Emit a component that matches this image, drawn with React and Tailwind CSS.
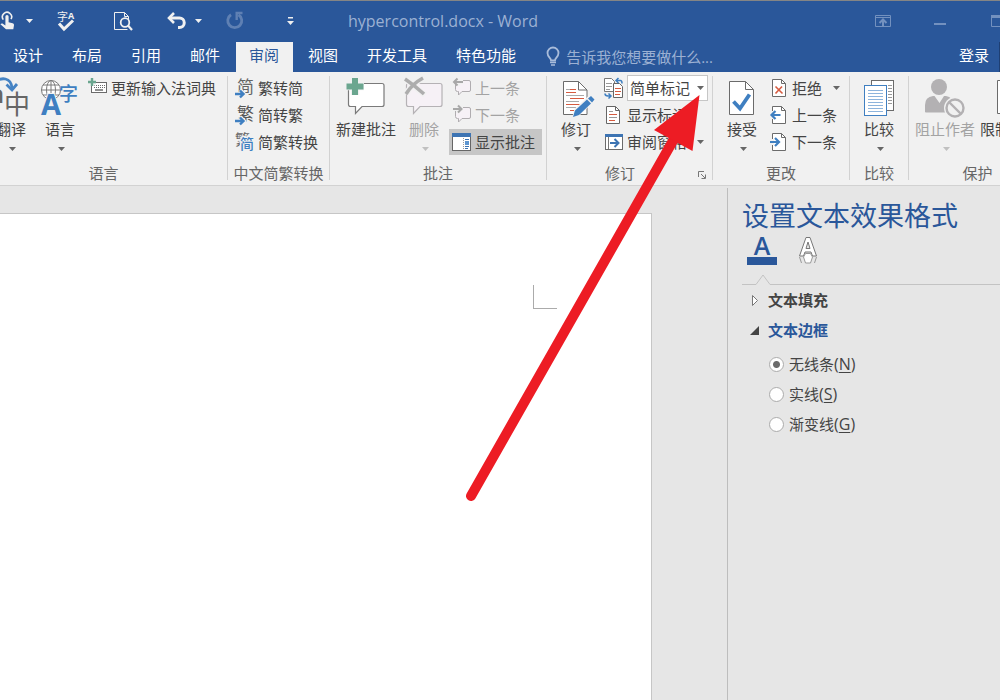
import React from "react";

function Caret({ className = "text-[#666]" }) {
  return (
    <svg width="7" height="4" viewBox="0 0 7 4" className={`shrink-0 ${className}`} aria-hidden="true">
      <path d="M0 0h7L3.5 4z" fill="currentColor" />
    </svg>
  );
}

function Icon({ w, h = 20, children }) {
  return (
    <svg width={w} height={h} viewBox={`0 0 ${w} ${h}`} fill="none" className="shrink-0 overflow-visible" aria-hidden="true">
      {children}
    </svg>
  );
}

/* ---------- Title bar icons ---------- */

const TouchIcon = () => (
  <Icon w={15}>
    <path d="M3.3 8.6A4.6 4.6 0 1 1 11 8.2" stroke="#f0f0f0" strokeWidth="1.6" />
    <path d="M5.4 5.6a1.6 1.6 0 0 1 3.2 0v5.6l4 1.1c1 .3 1.5 1 1.4 2l-.7 4H6L.4 13.3c.6-1 1.8-1.1 2.8-.4l2.2 1.5z" fill="#f0f0f0" />
  </Icon>
);
const SpellIcon = () => (
  <Icon w={19}>
    <text x="0" y="10" fontSize="11" fill="#f0f0f0">字</text>
    <text x="11" y="8" fontSize="9" fontWeight="700" fill="#f0f0f0">A</text>
    <path d="M2 12.5l5 5.5 9-8.5" stroke="#f0f0f0" strokeWidth="3" />
  </Icon>
);
const PreviewIcon = () => (
  <Icon w={20}>
    <path d="M15.5 8V5.5l-4-4h-10v17h13M11.5 1.5v4h4" stroke="#f0f0f0" />
    <circle cx="12" cy="11.5" r="4.3" stroke="#f0f0f0" strokeWidth="1.8" />
    <path d="M15 14.5l4 4.5" stroke="#f0f0f0" strokeWidth="2.2" />
  </Icon>
);
const UndoIcon = () => (
  <Icon w={19}>
    <path d="M7 2L2 7l5 5" stroke="#f0f0f0" strokeWidth="2.6" />
    <path d="M2 7h10.500a4.600 4.600 0 0 1 0 9.500H11" stroke="#f0f0f0" strokeWidth="3" />
  </Icon>
);
const RedoIcon = () => (
  <Icon w={18}>
    <path d="M5 3.800a7 7 0 1 0 7.500 0" stroke="#5f80b3" strokeWidth="2.8" />
    <path d="M9.500 2h7M10.700 2v7" stroke="#5f80b3" strokeWidth="2.4" />
  </Icon>
);

/* ---------- Ribbon icons ---------- */

const TranslateIcon = () => (
  <Icon w={48} h={44}>
    <text x="2" y="27" fontSize="25" fontWeight="700" fill="#666">a</text>
    <text x="17" y="38" fontSize="26" fill="#666">中</text>
    <path d="M9 6c5-5 15-5 16 6" stroke="#4583c4" strokeWidth="2.8" />
    <path d="M19.500 8.500l5.500 5.500 5-6" stroke="#4583c4" strokeWidth="2.8" />
  </Icon>
);
const LanguageIcon = () => (
  <Icon w={50} h={44}>
    <g stroke="#7a7a7a">
      <circle cx="16" cy="14" r="9.5" fill="#fff" />
      <ellipse cx="16" cy="14" rx="4.5" ry="9.5" />
      <path d="M16 4.500v19M6.500 14h19M8 9h16M8 19h16" />
    </g>
    <text x="6" y="39" fontSize="29" fontWeight="700" fill="#3f7fc1" stroke="#f1f1f1" strokeWidth="2" paintOrder="stroke">A</text>
    <text x="24" y="25" fontSize="19" fontWeight="500" fill="#3f7fc1">字</text>
  </Icon>
);
const KeyboardIcon = () => (
  <Icon w={19}>
    <rect x="3.500" y="4.500" width="15" height="10" fill="#fff" stroke="#6b6b6b" />
    <path d="M6 7.500h11M6 9.500h11" stroke="#6b6b6b" strokeDasharray="1 1" />
    <path d="M7 12h8" stroke="#6b6b6b" strokeWidth="1.500" />
    <path d="M4 0v8M0 4h8" stroke="#f1f1f1" strokeWidth="5" />
    <path d="M4 0v8M0 4h8" stroke="#6ba68f" strokeWidth="2.400" />
  </Icon>
);
const ConvertArrow = () => (
  <>
    <path d="M0 16h8M5 12l4 4-4 4" stroke="#f1f1f1" strokeWidth="4" />
    <path d="M0 16h8M5 12.500l3.500 3.500L5 19.500" stroke="#3f7fc1" strokeWidth="2.400" />
  </>
);
const ToSimplifiedIcon = () => (
  <Icon w={19}>
    <text x="2" y="15" fontSize="17" fill="#666">简</text>
    <ConvertArrow />
  </Icon>
);
const ToTraditionalIcon = () => (
  <Icon w={19}>
    <text x="2" y="15" fontSize="17" fill="#555">繁</text>
    <ConvertArrow />
  </Icon>
);
const ConvertIcon = () => (
  <Icon w={19}>
    <text x="0" y="13" fontSize="15" fill="#666">繁</text>
    <text x="5" y="17" fontSize="14" fontWeight="500" fill="#3f7fc1" stroke="#f1f1f1" strokeWidth="3" paintOrder="stroke">简</text>
  </Icon>
);
const NewCommentIcon = () => (
  <Icon w={38} h={44}>
    <path d="M3 7.500h32q2 0 2 2v19q0 2-2 2H15L8.500 37.500v-7H3.500q-2 0-2-2V9.500q0-2 2-2z" fill="#fff" stroke="#7a7a7a" strokeWidth="1.200" />
    <path d="M8 1v18M-1 10h18" stroke="#f1f1f1" strokeWidth="8.500" />
    <path d="M8 2v17M-.5 10.500h17" stroke="#6ba68f" strokeWidth="6" />
  </Icon>
);
const DeleteCommentIcon = () => (
  <Icon w={38} h={44}>
    <path d="M3 7.500h32q2 0 2 2v19q0 2-2 2H15L8.500 37.500v-7H3.500q-2 0-2-2V9.500q0-2 2-2z" fill="#f6f1f6" stroke="#b5b2b5" strokeWidth="1.200" />
    <path d="M0 3l20 16M18 2Q6 9 1 18" stroke="#f1f1f1" strokeWidth="6" />
    <path d="M0 3q9 6 19 15M18 2Q7 8 1 18" stroke="#adadad" strokeWidth="3.500" />
  </Icon>
);
const CommentNavIcon = ({ next }) => (
  <Icon w={18}>
    <path d="M4 2.500h12q1.500 0 1.500 1.500v8q0 1.500-1.500 1.500H9L5.500 17v-3.500H4.500q-2 0-2-2V4q0-1.500 1.500-1.500z" fill="#f6f1f6" stroke="#b0adb0" />
    <path d="M0 4h10M5 0v8" stroke="#f1f1f1" strokeWidth="4" />
    {next ? (
      <path d="M0 4h8M5 .5L8.500 4 5 7.500" stroke="#a8a8a8" strokeWidth="2" />
    ) : (
      <path d="M1 4h9M4.500 .5L1 4l3.500 3.500" stroke="#a8a8a8" strokeWidth="2" />
    )}
  </Icon>
);
const ShowCommentsIcon = () => (
  <Icon w={19}>
    <rect x=".5" y="1.500" width="18" height="17" fill="#fff" stroke="#666" />
    <path d="M0 1h19v4H0z" fill="#3d74b3" />
    <path d="M11.500 6v12" stroke="#999" strokeDasharray="1 1" />
    <path d="M13 7.500h4M13 14.500h4M13 16.500h3" stroke="#3d74b3" />
    <path d="M13 9h4v4h-4z" fill="#5d95d0" />
  </Icon>
);
const TrackIcon = () => (
  <Icon w={36} h={44}>
    <path d="M5.500 5.500h15l8.500 8.500v24.500H5.500z" fill="#fff" stroke="#6b6b6b" />
    <path d="M20.500 5.500V14H29" stroke="#6b6b6b" />
    <path d="M8 13.500h4M8 19.500h18M8 25.500h13M8 31.500h10" stroke="#aaa" />
    <path d="M12 13.500h6M8 16.500h10M12 22.500h14M8 28.500h14M12 34.500h4" stroke="#d65b40" />
    <path d="M14 42l2.500-9L31 19.500l6 5L22 39z" fill="#f1f1f1" />
    <path d="M15 41l2-6.500L29 23.500l4 4L21 39zM30 22.500l3-2.500 3.500 3.500-2.500 3z" fill="#3f7fc1" />
  </Icon>
);
const MarkupIcon = () => (
  <Icon w={19}>
    <path d="M.5 .5h7l3 3v10H.5z" fill="#fff" stroke="#777" />
    <path d="M2 5.500h6M2 8.500h6M2 11.500h4" stroke="#999" />
    <path d="M9.500 5.500h6l3 3v11h-9z" fill="#fff" stroke="#666" />
    <path d="M11 10.500h6M11 13.500h6M11 16.500h5" stroke="#d65b40" />
    <path d="M13 2.500h3.500q1.500 0 1.500 3M14.500 0L12 2.500 14.500 5M1 15.500q0 2.500 3 2.500h2M4.500 15.500L7 18l-2.500 2.500" stroke="#3f7fc1" strokeWidth="1.500" />
  </Icon>
);
const ShowMarkupIcon = () => (
  <Icon w={19}>
    <path d="M2.500 1.500h9l4 4v13h-13z" fill="#fff" stroke="#666" />
    <path d="M11.500 1.500v4h4" stroke="#666" />
    <path d="M5 6.500h4M5 12.500h8" stroke="#999" />
    <path d="M5 9.500h8M5 15.500h6" stroke="#d65b40" />
  </Icon>
);
const ReviewPaneIcon = () => (
  <Icon w={19}>
    <rect x="1.500" y="2.500" width="17" height="15" fill="#fff" stroke="#6b6b6b" />
    <path d="M1 2h18v3H1z" fill="#3d74b3" />
    <path d="M4.500 5v12" stroke="#777" />
    <path d="M6 11h8M10.500 7l4 4-4 4" stroke="#3d74b3" strokeWidth="2" />
  </Icon>
);
const AcceptIcon = () => (
  <Icon w={26} h={44}>
    <path d="M.5 5.500h16l8 8v25H.5z" fill="#fff" stroke="#6b6b6b" />
    <path d="M16.500 5.500v8h8" stroke="#6b6b6b" />
    <path d="M4.500 25.500l6.500 7 9.500-14" stroke="#3f7fc1" strokeWidth="3.800" />
  </Icon>
);
const SmallPage = ({ children }) => (
  <Icon w={17}>
    <path d="M2.500 1.500h9l4 4v13h-13z" fill="#fff" stroke="#6b6b6b" />
    <path d="M11.500 1.500v4h4" stroke="#6b6b6b" />
    {children}
  </Icon>
);
const RejectIcon = () => (
  <SmallPage>
    <path d="M5.500 8.500l7 7M12 8.500l-6.500 7" stroke="#d65b40" strokeWidth="1.600" />
  </SmallPage>
);
const PrevChangeIcon = () => (
  <SmallPage>
    <path d="M0 6h4v8H0z" fill="#f1f1f1" />
    <path d="M2 10h8.500M5.500 6L1.500 10l4 4" stroke="#3f7fc1" strokeWidth="2.200" />
  </SmallPage>
);
const NextChangeIcon = () => (
  <SmallPage>
    <path d="M0 7h4v6H0z" fill="#f1f1f1" />
    <path d="M0 10h8.500M5 6l4 4-4 4" stroke="#3f7fc1" strokeWidth="2.200" />
  </SmallPage>
);
const CompareIcon = () => (
  <Icon w={30} h={44}>
    <rect x="7.500" y="4.500" width="22" height="30" fill="#fff" stroke="#6b6b6b" />
    <path d="M24 9.500h4M24 12.500h4M24 15.500h4M24 18.500h4M24 21.500h4M24 24.500h4M24 27.500h4" stroke="#999" />
    <rect x=".5" y="9.500" width="22" height="30" fill="#fff" stroke="#3f7fc1" />
    <path d="M4 14.500h15M4 17.500h15M4 20.500h15M4 23.500h15M4 26.500h15M4 29.500h15M4 32.500h15M4 35.500h15" stroke="#8db4dc" />
  </Icon>
);
const BlockAuthorIcon = () => (
  <Icon w={40} h={44}>
    <circle cx="14" cy="11" r="8" fill="#b3b1b3" />
    <path d="M0 36V29q0-8 8-9h1.500l5 7 4.500-7h2q7 1 8 9v7.500H3Q0 36.500 0 36z" fill="#b3b1b3" />
    <circle cx="30" cy="32" r="11" fill="#f1f1f1" />
    <circle cx="30" cy="32" r="8.500" stroke="#b3b1b3" strokeWidth="2.400" />
    <path d="M24 26l12 12" stroke="#b3b1b3" strokeWidth="2.400" />
  </Icon>
);
const RestrictIcon = () => (
  <Icon w={26} h={44}>
    <path d="M.5 4.500h16l8 8v25H.5z" fill="#fff" stroke="#6b6b6b" />
  </Icon>
);

/* ---------- Ribbon building blocks ---------- */

function Group({ label, className = "", launcher = false, children }) {
  return (
    <section aria-label={label} className={`flex shrink-0 flex-col border-r border-[#d2d2d2] ${className}`}>
      <div className="flex h-[90px] items-start">{children}</div>
      <div className={`flex h-[14px] items-center whitespace-nowrap text-[#666] ${launcher ? "pl-[58px] pr-[6px]" : "justify-center"}`}>
        <span className="leading-[14px]">{label}</span>
        {launcher && (
          <button type="button" aria-label="修订选项" className="ml-auto pt-1">
            <svg width="8" height="8" viewBox="0 0 8 8" fill="none" className="block" aria-hidden="true">
              <path d="M.5 6V.5H6M3 3l4 4M7.500 3.500v4h-4" stroke="#777" />
            </svg>
          </button>
        )}
      </div>
    </section>
  );
}

function BigButton({ icon, label, className = "", caret = true, disabled = false }) {
  return (
    <button
      type="button"
      disabled={disabled}
      className={`flex shrink-0 flex-col items-center whitespace-nowrap ${disabled ? "text-[#a3a3a3]" : "text-[#444]"} ${className}`}
    >
      {icon}
      <span className="pb-[3px] leading-[18px]">{label}</span>
      {caret && (
        <span className="flex h-4 items-center pl-[2px]">
          <Caret className={disabled ? "text-[#c0c0c0]" : "text-[#666]"} />
        </span>
      )}
    </button>
  );
}

function SmallButton({ icon, label, className = "gap-1", disabled = false, caret = false }) {
  return (
    <button
      type="button"
      disabled={disabled}
      className={`flex h-6 items-center whitespace-nowrap ${disabled ? "text-[#a3a3a3]" : "text-[#444]"} ${className}`}
    >
      {icon}
      <span>{label}</span>
      {caret && <Caret className="ml-auto text-[#666]" />}
    </button>
  );
}

const Column = ({ className = "", children }) => (
  <div className={`flex flex-col gap-[3px] ${className}`}>{children}</div>
);

/* ---------- Page sections ---------- */

function TitleBar() {
  const qa = "flex h-10 shrink-0 items-center";
  return (
    <header className="flex h-[42px] items-center overflow-hidden border-t border-[#858585] pb-px">
      <button type="button" aria-label="触摸/鼠标模式" className={`${qa} w-[57px] gap-[11px]`}>
        <TouchIcon />
        <Caret className="text-[#f0f0f0]" />
      </button>
      <button type="button" aria-label="拼写和语法" className={`${qa} w-[56px]`}><SpellIcon /></button>
      <button type="button" aria-label="打印预览" className={`${qa} w-[54px]`}><PreviewIcon /></button>
      <button type="button" aria-label="撤消" className={`${qa} w-[59px] gap-[9px]`}>
        <UndoIcon />
        <Caret className="text-[#f0f0f0]" />
      </button>
      <button type="button" aria-label="重复" disabled className={`${qa} w-[61px]`}><RedoIcon /></button>
      <button type="button" aria-label="自定义快速访问工具栏" className={`${qa} w-[61px]`}>
        <svg width="7" height="8" viewBox="0 0 7 8" aria-hidden="true">
          <path d="M1 0h5v1.500H1zM0 4h7L3.500 8z" fill="#f0f0f0" />
        </svg>
      </button>
      <h1 className="whitespace-nowrap text-base leading-5 text-[#9cb1d3]">hypercontrol.docx - Word</h1>
      <div className="ml-auto flex items-center pb-px">
        <button type="button" aria-label="功能区显示选项" className="w-[59px]">
          <svg width="16" height="12" viewBox="0 0 16 12" fill="none" aria-hidden="true">
            <path d="M.5 .5h15v11H.5zM.5 2.500h15" stroke="#7391bf" />
            <path d="M8 11V5M4.500 8L8 4.500 11.500 8" stroke="#7391bf" strokeWidth="2" />
          </svg>
        </button>
        <button type="button" aria-label="最小化" className="w-[57px]">
          <svg width="12" height="8" viewBox="0 0 12 8" aria-hidden="true"><path d="M0 6h12v2H0z" fill="#7391bf" /></svg>
        </button>
        <button type="button" aria-label="最大化" className="w-[9px] overflow-hidden">
          <svg width="12" height="12" viewBox="0 0 12 12" fill="none" className="max-w-none" aria-hidden="true">
            <path d="M.5 .5h11v11H.5z" stroke="#7391bf" />
            <path d="M0 0h12v3H0z" fill="#7391bf" />
          </svg>
        </button>
      </div>
    </header>
  );
}

const tabs = ["设计", "布局", "引用", "邮件", "审阅", "视图", "开发工具", "特色功能"];

function TabBar() {
  return (
    <div className="flex h-[30px] items-stretch">
      <nav className="flex gap-[2px]" aria-label="功能区选项卡">
        {tabs.map((t, i) => (
          <button
            key={t}
            type="button"
            className={`whitespace-nowrap pb-1 pr-[14px] ${i === 0 ? "pl-[13px]" : "pl-[13px]"} ${t === "审阅" ? "bg-[#f1f1f1] text-[#2a579a]" : "text-white"}`}
          >
            {t}
          </button>
        ))}
      </nav>
      <label className="ml-4 flex flex-1 items-center gap-[5px]">
        <Icon w={15}>
          <path d="M5 13.500c0-2.500-3.500-3.500-3.500-7.500a5.500 5.500 0 0 1 11 0c0 4-3.500 5-3.500 7.500z" stroke="#a9bcda" strokeWidth="1.800" />
          <path d="M4 15.500h6M5 18h4" stroke="#a9bcda" strokeWidth="1.600" />
        </Icon>
        <input
          type="text"
          aria-label="告诉我您想要做什么"
          placeholder="告诉我您想要做什么..."
          className="w-full bg-transparent pb-px text-white outline-none placeholder:text-[#9cb1d3]"
        />
      </label>
      <button type="button" className="mr-[10px] whitespace-nowrap pb-1 text-white">登录</button>
      <span className="w-px bg-[#1e3f73]" />
    </div>
  );
}

function Ribbon() {
  return (
    <div className="flex overflow-hidden border-b border-[#d2d2d2] bg-[#f1f1f1] pb-[5px] pt-1">
      <Group label="语言" className="-ml-5 w-[248px]">
        <BigButton icon={<TranslateIcon />} label="翻译" className="ml-[7px] w-[48px]" />
        <BigButton icon={<LanguageIcon />} label="语言" className="w-[50px]" />
        <Column className="ml-[3px]">
          <SmallButton icon={<KeyboardIcon />} label="更新输入法词典" />
        </Column>
      </Group>

      <Group label="中文简繁转换" className="w-[102px]">
        <Column className="pl-[7px]">
          <SmallButton icon={<ToSimplifiedIcon />} label="繁转简" />
          <SmallButton icon={<ToTraditionalIcon />} label="简转繁" />
          <SmallButton icon={<ConvertIcon />} label="简繁转换" />
        </Column>
      </Group>

      <Group label="批注" className="w-[217px]">
        <BigButton icon={<NewCommentIcon />} label="新建批注" caret={false} className="ml-1 w-[64px]" />
        <BigButton icon={<DeleteCommentIcon />} label="删除" disabled className="ml-[2px] w-[48px]" />
        <Column className="ml-px">
          <SmallButton icon={<CommentNavIcon />} label="上一条" disabled className="gap-1 px-1" />
          <SmallButton icon={<CommentNavIcon next />} label="下一条" disabled className="gap-1 px-1" />
          <div className="flex h-6 items-center">
            <button type="button" aria-pressed="true" className="flex h-[26px] shrink-0 items-center gap-1 whitespace-nowrap bg-[#c6c6c6] pl-[3px] pr-[7px] text-[#444]">
              <ShowCommentsIcon />
              <span>显示批注</span>
            </button>
          </div>
        </Column>
      </Group>

      <Group label="修订" launcher className="w-[166px]">
        <BigButton icon={<TrackIcon />} label="修订" className="ml-1 w-[50px]" />
        <Column className="ml-[3px] flex-1 pr-1">
          <div className="flex h-6 items-center gap-1">
            <MarkupIcon />
            <label className="relative flex flex-1 items-center">
              <select aria-label="显示以供审阅" className="h-[26px] w-full appearance-none border border-[#c6c6c6] bg-white pl-[2px] text-[#444]">
                <option>简单标记</option>
                <option>所有标记</option>
                <option>无标记</option>
                <option>原始状态</option>
              </select>
              <span className="pointer-events-none absolute right-1 flex">
                <Caret />
              </span>
            </label>
          </div>
          <SmallButton icon={<ShowMarkupIcon />} label="显示标记" className="gap-1 pr-1" />
          <SmallButton icon={<ReviewPaneIcon />} label="审阅窗格" caret className="gap-1 pr-1" />
        </Column>
      </Group>

      <Group label="更改" className="w-[137px]">
        <BigButton icon={<AcceptIcon />} label="接受" className="ml-[5px] w-[48px]" />
        <Column className="ml-1 w-[70px]">
          <SmallButton icon={<RejectIcon />} label="拒绝" caret className="gap-[5px]" />
          <SmallButton icon={<PrevChangeIcon />} label="上一条" className="gap-[5px]" />
          <SmallButton icon={<NextChangeIcon />} label="下一条" className="gap-[5px]" />
        </Column>
      </Group>

      <Group label="比较" className="w-[59px]">
        <BigButton icon={<CompareIcon />} label="比较" className="w-full" />
      </Group>

      <Group label="保护" className="w-[138px]">
        <BigButton icon={<BlockAuthorIcon />} label="阻止作者" disabled className="ml-[3px] w-[66px]" />
        <BigButton icon={<RestrictIcon />} label="限制编辑" caret={false} className="w-[64px]" />
      </Group>
    </div>
  );
}

function DocumentArea() {
  return (
    <main className="flex flex-1 flex-col pr-[75px] pt-[27px]">
      <div className="flex flex-1 flex-col items-end border-r border-t border-[#c6c6c6] bg-white">
        <span className="mr-[94px] mt-[71px] size-6 border-b border-l border-[#ababab]" />
      </div>
    </main>
  );
}

const lineOptions = [
  { name: "无线条", k: "N" },
  { name: "实线", k: "S" },
  { name: "渐变线", k: "G" },
];

function FormatPane() {
  return (
    <aside className="mt-[2px] w-[273px] shrink-0 border-l border-[#bdbdbd] pl-[14px] text-[#444]">
      <h2 className="pt-2 text-[27px] leading-10 text-[#2a579a]">设置文本效果格式</h2>
      <div className="flex gap-[21px] pl-[5px]">
        <button type="button" aria-label="文本填充与轮廓">
          <Icon w={30} h={29}>
            <text x="15" y="19" fontSize="25" fontWeight="600" textAnchor="middle" fill="#2a579a">A</text>
            <path d="M0 21h30v8H0z" fill="#2a579a" />
          </Icon>
        </button>
        <button type="button" aria-label="文字效果">
          <Icon w={20} h={29}>
            <g stroke="#777" strokeLinejoin="round">
              <path d="M8 1.500h4L18.500 20h-4l-1.500-4H7l-1.500 4h-4zM10 6l-2 6.500h4z" fill="#fff" />
              <path d="M1.500 21l2 6M18.500 21l-2 6M7.500 17.500h5l2 3.500-2 6h-5l-2-6z" fill="#fff" stroke="#999" />
            </g>
          </Icon>
        </button>
      </div>
      <svg className="mt-[9px] block w-full" height="11" fill="none" aria-hidden="true">
        <path d="M0 10.500h14L21 1l7 9.500h400" stroke="#c3c3c3" />
      </svg>
      <button type="button" aria-expanded="false" className="flex h-[30px] items-center gap-[9px] pl-[9px] font-bold">
        <svg width="8" height="13" viewBox="0 0 8 13" fill="none" aria-hidden="true">
          <path d="M1.500 1.500v10l5-5z" fill="#fff" stroke="#777" />
        </svg>
        文本填充
      </button>
      <button type="button" aria-expanded="true" className="flex h-[30px] items-center gap-[9px] pl-2 font-bold text-[#2a579a]">
        <svg width="9" height="9" viewBox="0 0 9 9" aria-hidden="true">
          <path d="M9 0v9H0z" fill="#444" />
        </svg>
        文本边框
      </button>
      <fieldset className="pl-[27px] pt-1">
        {lineOptions.map((o) => (
          <label key={o.k} className="flex h-[30px] items-center gap-[5px]">
            <input
              type="radio"
              name="outline"
              defaultChecked={o.k === "N"}
              className="size-[15px] appearance-none rounded-full border border-[#ababab] bg-white checked:bg-[radial-gradient(circle,#6b6b6b_3px,white_4px)]"
            />
            <span>
              {o.name}
              <span className="text-base leading-5">
                (<u className="underline-offset-2">{o.k}</u>)
              </span>
            </span>
          </label>
        ))}
      </fieldset>
    </aside>
  );
}

function PointerArrow() {
  return (
    <svg className="pointer-events-none absolute left-0 top-0" width="720" height="520" viewBox="0 0 720 520" aria-hidden="true">
      <path d="M471 496L674 139" stroke="#ed1c24" strokeWidth="10" strokeLinecap="round" />
      <path d="M699.500 95L692.500 151 654 130z" fill="#ed1c24" />
    </svg>
  );
}

export default function App() {
  return (
    <div className="relative flex min-h-screen flex-col overflow-hidden bg-[#e6e6e6] font-['Open_Sans','Noto_Sans_CJK_SC',sans-serif] text-[15px] leading-5">
      <div className="bg-[#2a579a]">
        <TitleBar />
        <TabBar />
      </div>
      <Ribbon />
      <div className="flex flex-1">
        <DocumentArea />
        <FormatPane />
      </div>
      <PointerArrow />
    </div>
  );
}
